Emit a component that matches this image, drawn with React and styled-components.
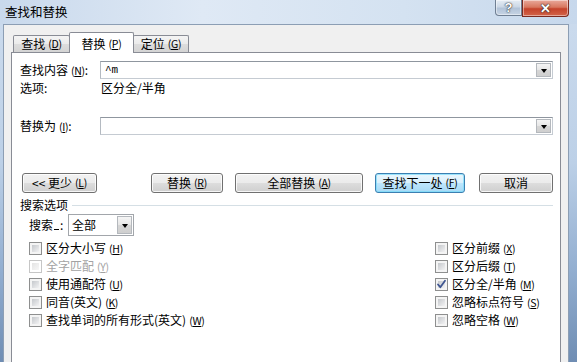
import styled, { createGlobalStyle } from "styled-components";

const GlobalStyle = createGlobalStyle`
  html, body { margin: 0; padding: 0; }
  body {
    font-family: "Noto Sans CJK SC", "Liberation Sans", sans-serif;
    font-size: 12px;
    color: #000;
  }
`;

const Window = styled.div`
  width: 577px;
  height: 362px;
  overflow: hidden;
  display: flex;
  flex-direction: column;
  background: linear-gradient(to bottom, #cddcee 0%, #bcd0e7 45%, #92aed0 75%, #6f8db3 100%);
`;

const TitleBar = styled.div`
  height: 24px;
  flex-shrink: 0;
  display: flex;
  justify-content: space-between;
  align-items: flex-start;
  padding-left: 5px;
  background: linear-gradient(to right, #c9d9ec 0%, #dfe9f5 35%, #d4e2f1 70%, #c7d8ec 100%);
`;

const Title = styled.div`
  margin-top: 5px;
  line-height: 14px;
  font-size: 12.5px;
`;

const Caption = styled.div`
  display: flex;
  margin-right: 8px;
`;

const CaptionButton = styled.div`
  height: ${(p) => (p.$close ? 17 : 16)}px;
  width: ${(p) => (p.$close ? 47 : 27)}px;
  box-sizing: border-box;
  display: flex;
  align-items: center;
  justify-content: center;
  border: 1px solid ${(p) => (p.$close ? "#7a2a20" : "#6f7f93")};
  border-top: none;
  border-radius: ${(p) => (p.$close ? "0 0 4px 0" : "0 0 0 4px")};
  background: ${(p) =>
    p.$close
      ? "linear-gradient(to bottom, #e9a99b 0%, #d8775f 45%, #c5432b 55%, #d2644a 100%)"
      : "linear-gradient(to bottom, #e6edf5 0%, #ccd8e6 45%, #b2c3d8 55%, #c6d4e4 100%)"};
  box-shadow: inset 0 0 0 1px rgba(255, 255, 255, 0.45);
  color: #fff;
  font-family: "Liberation Sans", sans-serif;
  font-weight: bold;
  font-size: 13px;
  text-shadow: 0 0 2px #333, 0 0 1px #000;
`;

const Client = styled.div`
  flex: 1;
  min-height: 0;
  margin: 0 8px 0 3px;
  background: #f0f0f0;
  border: 1px solid #8c9eb4;
  border-bottom: none;
  padding: 7px 7px 0 7px;
  display: flex;
  flex-direction: column;
`;

const TabRow = styled.div`
  height: 20px;
  flex-shrink: 0;
  display: flex;
  align-items: flex-end;
  padding-left: 2px;
`;

const Tab = styled.div`
  position: relative;
  z-index: ${(p) => (p.$active ? 2 : 1)};
  box-sizing: border-box;
  width: ${(p) => p.$w}px;
  height: ${(p) => (p.$active ? 21 : 17)}px;
  margin-bottom: ${(p) => (p.$active ? -1 : 0)}px;
  margin-left: -1px;
  display: flex;
  align-items: center;
  justify-content: center;
  padding-top: ${(p) => (p.$active ? 1 : 0)}px;
  border: 1px solid #898c95;
  border-bottom: none;
  border-radius: 2px 2px 0 0;
  background: ${(p) =>
    p.$active
      ? "#fff"
      : "linear-gradient(to bottom, #f4f4f4 0%, #ebebeb 50%, #dddddd 51%, #d4d4d4 100%)"};
  line-height: 14px;
  &:first-child { margin-left: 0; }
`;

const Panel = styled.div`
  flex: 1;
  background: #fff;
  border: 1px solid #898c95;
  border-bottom: none;
  padding: 8px 7px 0 8px;
  display: flex;
  flex-direction: column;
`;

const Key = styled.span`
  font-size: 10.5px;
  margin-left: 3px;
  letter-spacing: -0.3px;
  color: inherit;
  u { text-underline-offset: 1px; }
`;

const FieldRow = styled.div`
  display: flex;
  align-items: center;
  height: 18px;
  margin-top: ${(p) => p.$top || 0}px;
`;

const FieldLabel = styled.div`
  width: 80px;
  flex-shrink: 0;
  line-height: 16px;
`;

const Combo = styled.div`
  flex: 1;
  height: 18px;
  box-sizing: border-box;
  border: 1px solid #9aa1aa;
  border-color: #8f969f #c5cbd2 #c5cbd2 #b4bac1;
  display: flex;
  align-items: center;
  justify-content: space-between;
  padding: 0 1px 0 4px;
  background: #fff;
  font-family: "Liberation Mono", "Noto Sans CJK SC", monospace;
  font-size: 11px;
`;

const DropButton = styled.div`
  width: 15px;
  height: ${(p) => p.$h || 14}px;
  box-sizing: border-box;
  border: 1px solid #b4b8bd;
  background: linear-gradient(to bottom, #f5f5f5 0%, #e6e6e6 50%, #d6d6d6 51%, #cfcfcf 100%);
  display: flex;
  align-items: center;
  justify-content: center;
  &::after {
    content: "";
    border-left: 3.5px solid transparent;
    border-right: 3.5px solid transparent;
    border-top: 4px solid #000;
    margin-top: 1px;
  }
`;

const InfoRow = styled.div`
  display: flex;
  height: 16px;
  margin-top: 1px;
  line-height: 16px;
`;

const InfoValue = styled.div`
  padding-left: 1px;
`;

const ButtonRow = styled.div`
  display: flex;
  margin-top: 38px;
  padding-left: 2px;
`;

const ButtonGroup = styled.div`
  display: flex;
  gap: 12px;
  margin-left: auto;
`;

const Button = styled.div`
  width: ${(p) => p.$w}px;
  height: 20px;
  box-sizing: border-box;
  display: flex;
  align-items: center;
  justify-content: center;
  border: 1px solid ${(p) => (p.$default ? "#3c7fb1" : "#707070")};
  border-radius: 3px;
  background: ${(p) =>
    p.$default
      ? "linear-gradient(to bottom, #eaf6fd 0%, #d9f0fc 50%, #bee6fd 51%, #a7d9f5 100%)"
      : "linear-gradient(to bottom, #f2f2f2 0%, #ebebeb 50%, #dddddd 51%, #cfcfcf 100%)"};
  box-shadow: inset 0 0 0 1px ${(p) => (p.$default ? "rgba(120,220,250,0.7)" : "rgba(255,255,255,0.8)")};
  line-height: 14px;
  margin-left: ${(p) => p.$ml || 0}px;
`;

const GroupHeading = styled.div`
  display: flex;
  align-items: center;
  height: 14px;
  margin-top: 5px;
  line-height: 14px;
  &::after {
    content: "";
    flex: 1;
    height: 1px;
    margin-left: 4px;
    background: #d5dfe5;
  }
`;

const SearchRow = styled.div`
  display: flex;
  align-items: center;
  margin-top: 2px;
  padding-left: 9px;
  height: 22px;
`;

const SearchLabel = styled.div`
  width: 39px;
  line-height: 16px;
`;

const Blank = styled.span`
  display: inline-block;
  width: 5px;
  border-bottom: 1px solid #000;
  margin: 0 1px;
  height: 10px;
`;

const Select = styled.div`
  width: 66px;
  height: 22px;
  box-sizing: border-box;
  border: 1px solid #a2a6ab;
  display: flex;
  align-items: center;
  justify-content: space-between;
  padding: 0 1px 0 3px;
  background: #fff;
  line-height: 16px;
`;

const Options = styled.div`
  display: flex;
  margin-top: 3px;
  padding-left: 9px;
`;

const Column = styled.div`
  display: flex;
  flex-direction: column;
  width: ${(p) => p.$w || "auto"};
`;

const CheckItem = styled.div`
  display: flex;
  align-items: center;
  height: 18px;
  gap: 4px;
  line-height: 16px;
  color: ${(p) => (p.$disabled ? "#a3a3a3" : "#000")};
`;

const Box = styled.span`
  width: 13px;
  height: 13px;
  box-sizing: border-box;
  flex-shrink: 0;
  border: 1px solid ${(p) => (p.$disabled ? "#c6c6c6" : "#8e8f8f")};
  padding: 2px;
  background: ${(p) =>
    p.$disabled
      ? "linear-gradient(135deg, #e4e4e4, #f7f7f7) content-box, #fff"
      : "linear-gradient(135deg, #c5c8cc, #f2f2f3) content-box, #f4f4f4"};
  position: relative;
  svg {
    position: absolute;
    left: 0;
    top: 0;
  }
`;

const Check = ({ label, k, checked, disabled }) => (
  <CheckItem $disabled={disabled}>
    <Box $disabled={disabled}>
      {checked && (
        <svg width="11" height="11" viewBox="0 0 11 11">
          <path d="M2 5.5 L4.3 8.2 L9 1.8" fill="none" stroke="#3f5691" strokeWidth="1.8" strokeLinecap="round" strokeLinejoin="round" />
        </svg>
      )}
    </Box>
    <span>
      {label}
      <Key>
        (<u>{k}</u>)
      </Key>
    </span>
  </CheckItem>
);

const Labeled = ({ text, k, colon }) => (
  <>
    {text}
    <Key>
      (<u>{k}</u>)
    </Key>
    {colon ? ":" : ""}
  </>
);

const leftOpts = [
  { label: "区分大小写", k: "H" },
  { label: "全字匹配", k: "Y", disabled: true },
  { label: "使用通配符", k: "U" },
  { label: "同音(英文)", k: "K" },
  { label: "查找单词的所有形式(英文)", k: "W" },
];

const rightOpts = [
  { label: "区分前缀", k: "X" },
  { label: "区分后缀", k: "T" },
  { label: "区分全/半角", k: "M", checked: true },
  { label: "忽略标点符号", k: "S" },
  { label: "忽略空格", k: "W" },
];

export default function App() {
  return (
    <>
      <GlobalStyle />
      <Window>
        <TitleBar>
          <Title>查找和替换</Title>
          <Caption>
            <CaptionButton>?</CaptionButton>
            <CaptionButton $close>✕</CaptionButton>
          </Caption>
        </TitleBar>
        <Client>
          <TabRow>
            <Tab $w={57}>
              <Labeled text="查找" k="D" />
            </Tab>
            <Tab $w={65} $active>
              <Labeled text="替换" k="P" />
            </Tab>
            <Tab $w={56}>
              <Labeled text="定位" k="G" />
            </Tab>
          </TabRow>
          <Panel>
            <FieldRow>
              <FieldLabel>
                <Labeled text="查找内容" k="N" colon />
              </FieldLabel>
              <Combo>
                <span>^m</span>
                <DropButton />
              </Combo>
            </FieldRow>
            <InfoRow>
              <FieldLabel>选项:</FieldLabel>
              <InfoValue>区分全/半角</InfoValue>
            </InfoRow>
            <FieldRow $top={21}>
              <FieldLabel>
                <Labeled text="替换为" k="I" colon />
              </FieldLabel>
              <Combo>
                <span />
                <DropButton />
              </Combo>
            </FieldRow>
            <ButtonRow>
              <Button $w={75}>
                {"<< 更少"}
                <Key>
                  (<u>L</u>)
                </Key>
              </Button>
              <ButtonGroup>
                <Button $w={72}>
                  <Labeled text="替换" k="R" />
                </Button>
                <Button $w={128}>
                  <Labeled text="全部替换" k="A" />
                </Button>
                <Button $w={90} $default>
                  <Labeled text="查找下一处" k="F" />
                </Button>
                <Button $w={74} $ml={2}>
                  取消
                </Button>
              </ButtonGroup>
            </ButtonRow>
            <GroupHeading>搜索选项</GroupHeading>
            <SearchRow>
              <SearchLabel>
                搜索<Blank />:
              </SearchLabel>
              <Select>
                <span>全部</span>
                <DropButton $h={18} />
              </Select>
            </SearchRow>
            <Options>
              <Column $w="406px">
                {leftOpts.map((o) => (
                  <Check key={o.label} {...o} />
                ))}
              </Column>
              <Column>
                {rightOpts.map((o) => (
                  <Check key={o.label} {...o} />
                ))}
              </Column>
            </Options>
          </Panel>
        </Client>
      </Window>
    </>
  );
}
